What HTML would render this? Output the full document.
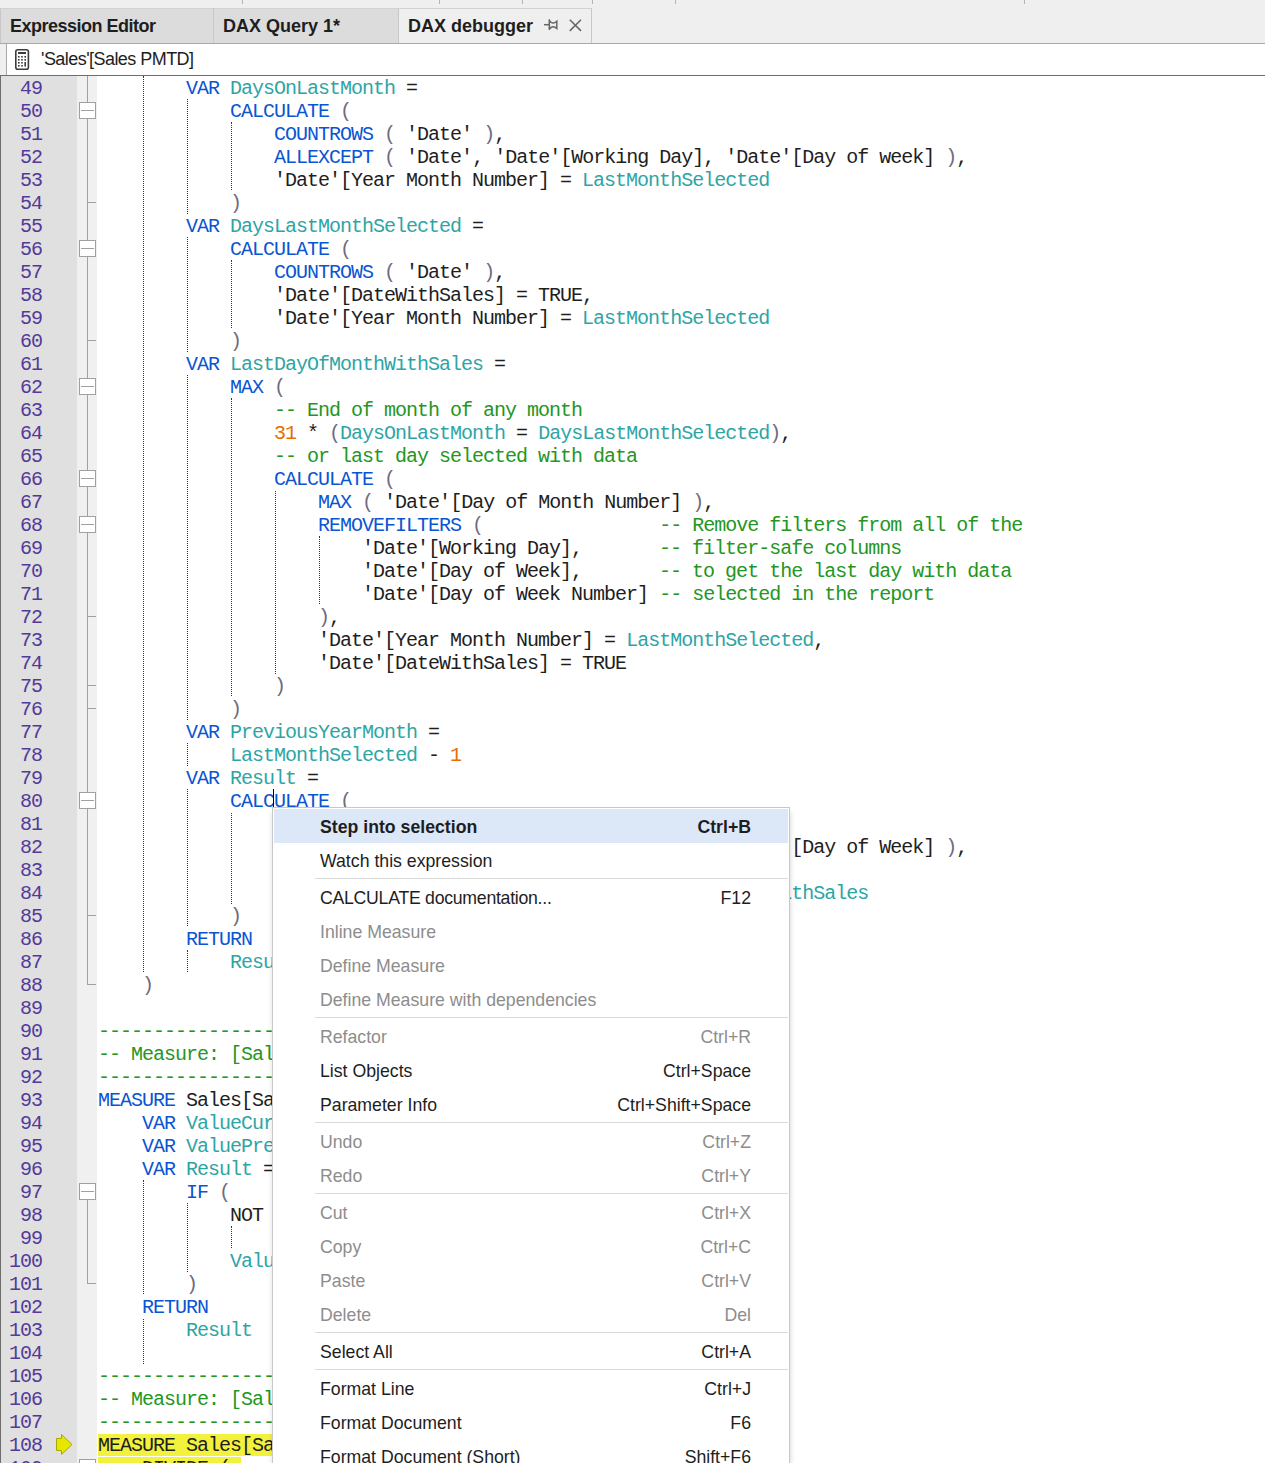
<!DOCTYPE html>
<html><head><meta charset="utf-8">
<style>
html,body{margin:0;padding:0}
body{width:1265px;height:1463px;overflow:hidden;position:relative;background:#efefef;font-family:"Liberation Sans",sans-serif}
.a{position:absolute}
.tab{position:absolute;top:8px;height:35px;background:#dcdcdc;border-top:1px solid #d2d2d2;border-left:1px solid #c8c8c8;box-sizing:border-box}
.tabt{position:absolute;top:8px;font-weight:bold;font-size:18px;line-height:18px;color:#1e1e1e;white-space:pre}
#editor{position:absolute;left:0;top:76px;width:1265px;height:1387px;background:#fff;border-left:1px solid #6d6d6d;box-sizing:border-box}
#gut{position:absolute;left:1px;top:76px;width:76px;height:1387px;background:#e0e0e0}
#fstrip{position:absolute;left:77px;top:76px;width:20px;height:1387px;background:#f0f0f0}
.ln{position:absolute;left:0;width:42px;text-align:right;font-family:"Liberation Mono",monospace;font-size:20.0px;letter-spacing:-1.0px;line-height:23px;height:23px;color:#533a9a;white-space:pre;padding-top:0.5px;box-sizing:border-box}
.code{position:absolute;left:98px;font-family:"Liberation Mono",monospace;font-size:20.0px;letter-spacing:-1.0px;line-height:23px;height:23px;white-space:pre;padding-top:0.5px;box-sizing:border-box}
.hl{position:absolute;left:98px;height:22px;background:#f2f23e}
.guide{position:absolute;width:1px;background:repeating-linear-gradient(to bottom,#333 0 1px,transparent 1px 2px)}
.fl{position:absolute;left:87px;width:1px;background:#a0a0a0}
.ft{position:absolute;left:87px;width:9px;height:1px;background:#a0a0a0}
.fb{position:absolute;left:79px;width:17px;height:17px;box-sizing:border-box;border:1px solid #a0a0a0;background:#fff}
.fb i{position:absolute;left:1px;top:7px;width:13px;height:1px;background:#a0a0a0}
#menu{position:absolute;left:272px;top:807px;width:518px;height:700px;background:#fff;border:1px solid #c8c8c8;box-sizing:border-box;padding:1px;box-shadow:2px 4px 5px -1px rgba(0,0,0,0.13),-2px 4px 5px -1px rgba(0,0,0,0.08)}
.mi{position:relative;height:34px;font-size:17.7px;color:#1e1e1e}
.mi .mt{position:absolute;left:46px;top:8px;line-height:20px;white-space:pre}
.mi .mk{position:absolute;right:37px;top:8px;line-height:20px;white-space:pre}
.mi.hot{background:#dce7f8;font-weight:bold}
.mi.dis{color:#8d8d8d}
.sep{height:3px;position:relative}
.sep:after{content:"";position:absolute;left:41px;right:0;top:1px;height:1px;background:#d9d9d9}
</style></head><body>
<!-- faint toolbar remnants -->
<div class="a" style="left:242px;top:0;width:1px;height:4px;background:#b4b4b4"></div>
<div class="a" style="left:439px;top:0;width:1px;height:4px;background:#b4b4b4"></div>
<div class="a" style="left:522px;top:0;width:1px;height:4px;background:#b4b4b4"></div>
<div class="a" style="left:592px;top:0;width:1px;height:4px;background:#b4b4b4"></div>
<div class="a" style="left:675px;top:0;width:1px;height:4px;background:#b4b4b4"></div>
<div class="a" style="left:1024px;top:0;width:1px;height:4px;background:#b4b4b4"></div>
<!-- tabs -->
<div class="tab" style="left:0;width:214px"></div>
<div class="tab" style="left:213px;width:186px"></div>
<div class="tab" style="left:398px;width:194px;background:#efefef;border-right:1px solid #c8c8c8"></div>
<div class="tabt" style="left:10px;top:17px;letter-spacing:-0.5px">Expression Editor</div>
<div class="tabt" style="left:223px;top:17px">DAX Query 1*</div>
<div class="tabt" style="left:408px;top:17px">DAX debugger</div>
<svg class="a" style="left:530px;top:10px" width="60" height="30" viewBox="0 0 60 30"><g fill="none" stroke="#666" stroke-width="1.5"><path d="M14 14.7H19.2"/><path d="M19.3 9.3V19.8"/><path d="M19.3 10.3Q22.5 15.2 26.8 11.3V18.4Q22.5 14.6 19.3 19.2"/><path d="M39.8 9.7L51 20.9M51 9.7L39.8 20.9"/></g></svg>
<div class="a" style="left:0;top:43px;width:1265px;height:1px;background:#a8a8a8"></div>

<!-- combobox row -->
<div class="a" style="left:6px;top:44px;width:1259px;height:31px;background:#fff;border-left:1px solid #a8a8a8;box-sizing:border-box"></div>
<svg class="a" style="left:14px;top:48px" width="17" height="23" viewBox="0 0 17 23">
<rect x="1.8" y="1.8" width="12.6" height="19.4" rx="2" fill="none" stroke="#3c3c3c" stroke-width="1.6"/>
<rect x="4" y="4" width="8" height="2" fill="#3c3c3c"/>
<g fill="#3c3c3c"><rect x="4" y="8" width="1.6" height="1.6"/><rect x="7.2" y="8" width="1.6" height="1.6"/><rect x="10.4" y="8" width="1.6" height="1.6"/>
<rect x="4" y="11" width="1.6" height="1.6"/><rect x="7.2" y="11" width="1.6" height="1.6"/><rect x="10.4" y="11" width="1.6" height="1.6"/>
<rect x="4" y="14" width="1.6" height="1.6"/><rect x="7.2" y="14" width="1.6" height="1.6"/><rect x="10.4" y="14" width="1.6" height="4.6"/>
<rect x="4" y="17" width="1.6" height="1.6"/><rect x="7.2" y="17" width="1.6" height="1.6"/></g>
</svg>
<div class="a" style="left:41px;top:50px;font-size:18px;line-height:18px;letter-spacing:-0.55px;color:#1e1e1e;white-space:pre">'Sales'[Sales PMTD]</div>
<div class="a" style="left:0;top:75px;width:1265px;height:1px;background:#6d6d6d"></div>

<!-- editor -->
<div id="editor"></div>
<div id="gut"></div>
<div id="fstrip"></div>
<div class="fl" style="top:76px;height:909px"></div>
<div class="ft" style="top:984px"></div>
<div class="fl" style="top:1191px;height:93px"></div>
<div class="ft" style="top:1283px"></div>
<div class="fl" style="top:1467px;height:20px"></div>
<div class="ft" style="top:202px"></div>
<div class="ft" style="top:340px"></div>
<div class="ft" style="top:616px"></div>
<div class="ft" style="top:685px"></div>
<div class="ft" style="top:708px"></div>
<div class="ft" style="top:915px"></div>
<div class="fb" style="top:102px"><i></i></div>
<div class="fb" style="top:240px"><i></i></div>
<div class="fb" style="top:378px"><i></i></div>
<div class="fb" style="top:470px"><i></i></div>
<div class="fb" style="top:516px"><i></i></div>
<div class="fb" style="top:792px"><i></i></div>
<div class="fb" style="top:1183px"><i></i></div>
<div class="fb" style="top:1459px"><i></i></div>
<div class="ln" style="top:76px">49</div>
<div class="code" style="top:76px"><span style="color:#1e1e1e">&#32;&#32;&#32;&#32;&#32;&#32;&#32;&#32;</span><span style="color:#0a55d2">VAR</span><span style="color:#1e1e1e">&#32;</span><span style="color:#2ea5a5">DaysOnLastMonth</span><span style="color:#1e1e1e">&#32;=</span></div>
<div class="ln" style="top:99px">50</div>
<div class="code" style="top:99px"><span style="color:#1e1e1e">&#32;&#32;&#32;&#32;&#32;&#32;&#32;&#32;&#32;&#32;&#32;&#32;</span><span style="color:#0a55d2">CALCULATE</span><span style="color:#1e1e1e">&#32;</span><span style="color:#6e6a80">(</span></div>
<div class="ln" style="top:122px">51</div>
<div class="code" style="top:122px"><span style="color:#1e1e1e">&#32;&#32;&#32;&#32;&#32;&#32;&#32;&#32;&#32;&#32;&#32;&#32;&#32;&#32;&#32;&#32;</span><span style="color:#0a55d2">COUNTROWS</span><span style="color:#1e1e1e">&#32;</span><span style="color:#6e6a80">(</span><span style="color:#1e1e1e">&#32;</span><span style="color:#1e1e1e">&#x27;Date&#x27;</span><span style="color:#1e1e1e">&#32;</span><span style="color:#6e6a80">)</span><span style="color:#1e1e1e">,</span></div>
<div class="ln" style="top:145px">52</div>
<div class="code" style="top:145px"><span style="color:#1e1e1e">&#32;&#32;&#32;&#32;&#32;&#32;&#32;&#32;&#32;&#32;&#32;&#32;&#32;&#32;&#32;&#32;</span><span style="color:#0a55d2">ALLEXCEPT</span><span style="color:#1e1e1e">&#32;</span><span style="color:#6e6a80">(</span><span style="color:#1e1e1e">&#32;</span><span style="color:#1e1e1e">&#x27;Date&#x27;</span><span style="color:#1e1e1e">,&#32;</span><span style="color:#1e1e1e">&#x27;Date&#x27;</span><span style="color:#1e1e1e">[Working&#32;Day]</span><span style="color:#1e1e1e">,&#32;</span><span style="color:#1e1e1e">&#x27;Date&#x27;</span><span style="color:#1e1e1e">[Day&#32;of&#32;week]</span><span style="color:#1e1e1e">&#32;</span><span style="color:#6e6a80">)</span><span style="color:#1e1e1e">,</span></div>
<div class="ln" style="top:168px">53</div>
<div class="code" style="top:168px"><span style="color:#1e1e1e">&#32;&#32;&#32;&#32;&#32;&#32;&#32;&#32;&#32;&#32;&#32;&#32;&#32;&#32;&#32;&#32;</span><span style="color:#1e1e1e">&#x27;Date&#x27;</span><span style="color:#1e1e1e">[Year&#32;Month&#32;Number]</span><span style="color:#1e1e1e">&#32;=&#32;</span><span style="color:#2ea5a5">LastMonthSelected</span></div>
<div class="ln" style="top:191px">54</div>
<div class="code" style="top:191px"><span style="color:#1e1e1e">&#32;&#32;&#32;&#32;&#32;&#32;&#32;&#32;&#32;&#32;&#32;&#32;</span><span style="color:#6e6a80">)</span></div>
<div class="ln" style="top:214px">55</div>
<div class="code" style="top:214px"><span style="color:#1e1e1e">&#32;&#32;&#32;&#32;&#32;&#32;&#32;&#32;</span><span style="color:#0a55d2">VAR</span><span style="color:#1e1e1e">&#32;</span><span style="color:#2ea5a5">DaysLastMonthSelected</span><span style="color:#1e1e1e">&#32;=</span></div>
<div class="ln" style="top:237px">56</div>
<div class="code" style="top:237px"><span style="color:#1e1e1e">&#32;&#32;&#32;&#32;&#32;&#32;&#32;&#32;&#32;&#32;&#32;&#32;</span><span style="color:#0a55d2">CALCULATE</span><span style="color:#1e1e1e">&#32;</span><span style="color:#6e6a80">(</span></div>
<div class="ln" style="top:260px">57</div>
<div class="code" style="top:260px"><span style="color:#1e1e1e">&#32;&#32;&#32;&#32;&#32;&#32;&#32;&#32;&#32;&#32;&#32;&#32;&#32;&#32;&#32;&#32;</span><span style="color:#0a55d2">COUNTROWS</span><span style="color:#1e1e1e">&#32;</span><span style="color:#6e6a80">(</span><span style="color:#1e1e1e">&#32;</span><span style="color:#1e1e1e">&#x27;Date&#x27;</span><span style="color:#1e1e1e">&#32;</span><span style="color:#6e6a80">)</span><span style="color:#1e1e1e">,</span></div>
<div class="ln" style="top:283px">58</div>
<div class="code" style="top:283px"><span style="color:#1e1e1e">&#32;&#32;&#32;&#32;&#32;&#32;&#32;&#32;&#32;&#32;&#32;&#32;&#32;&#32;&#32;&#32;</span><span style="color:#1e1e1e">&#x27;Date&#x27;</span><span style="color:#1e1e1e">[DateWithSales]</span><span style="color:#1e1e1e">&#32;=&#32;</span><span style="color:#1e1e1e">TRUE</span><span style="color:#1e1e1e">,</span></div>
<div class="ln" style="top:306px">59</div>
<div class="code" style="top:306px"><span style="color:#1e1e1e">&#32;&#32;&#32;&#32;&#32;&#32;&#32;&#32;&#32;&#32;&#32;&#32;&#32;&#32;&#32;&#32;</span><span style="color:#1e1e1e">&#x27;Date&#x27;</span><span style="color:#1e1e1e">[Year&#32;Month&#32;Number]</span><span style="color:#1e1e1e">&#32;=&#32;</span><span style="color:#2ea5a5">LastMonthSelected</span></div>
<div class="ln" style="top:329px">60</div>
<div class="code" style="top:329px"><span style="color:#1e1e1e">&#32;&#32;&#32;&#32;&#32;&#32;&#32;&#32;&#32;&#32;&#32;&#32;</span><span style="color:#6e6a80">)</span></div>
<div class="ln" style="top:352px">61</div>
<div class="code" style="top:352px"><span style="color:#1e1e1e">&#32;&#32;&#32;&#32;&#32;&#32;&#32;&#32;</span><span style="color:#0a55d2">VAR</span><span style="color:#1e1e1e">&#32;</span><span style="color:#2ea5a5">LastDayOfMonthWithSales</span><span style="color:#1e1e1e">&#32;=</span></div>
<div class="ln" style="top:375px">62</div>
<div class="code" style="top:375px"><span style="color:#1e1e1e">&#32;&#32;&#32;&#32;&#32;&#32;&#32;&#32;&#32;&#32;&#32;&#32;</span><span style="color:#0a55d2">MAX</span><span style="color:#1e1e1e">&#32;</span><span style="color:#6e6a80">(</span></div>
<div class="ln" style="top:398px">63</div>
<div class="code" style="top:398px"><span style="color:#1e1e1e">&#32;&#32;&#32;&#32;&#32;&#32;&#32;&#32;&#32;&#32;&#32;&#32;&#32;&#32;&#32;&#32;</span><span style="color:#239623">--&#32;End&#32;of&#32;month&#32;of&#32;any&#32;month</span></div>
<div class="ln" style="top:421px">64</div>
<div class="code" style="top:421px"><span style="color:#1e1e1e">&#32;&#32;&#32;&#32;&#32;&#32;&#32;&#32;&#32;&#32;&#32;&#32;&#32;&#32;&#32;&#32;</span><span style="color:#e66f00">31</span><span style="color:#1e1e1e">&#32;*&#32;</span><span style="color:#6e6a80">(</span><span style="color:#2ea5a5">DaysOnLastMonth</span><span style="color:#1e1e1e">&#32;=&#32;</span><span style="color:#2ea5a5">DaysLastMonthSelected</span><span style="color:#6e6a80">)</span><span style="color:#1e1e1e">,</span></div>
<div class="ln" style="top:444px">65</div>
<div class="code" style="top:444px"><span style="color:#1e1e1e">&#32;&#32;&#32;&#32;&#32;&#32;&#32;&#32;&#32;&#32;&#32;&#32;&#32;&#32;&#32;&#32;</span><span style="color:#239623">--&#32;or&#32;last&#32;day&#32;selected&#32;with&#32;data</span></div>
<div class="ln" style="top:467px">66</div>
<div class="code" style="top:467px"><span style="color:#1e1e1e">&#32;&#32;&#32;&#32;&#32;&#32;&#32;&#32;&#32;&#32;&#32;&#32;&#32;&#32;&#32;&#32;</span><span style="color:#0a55d2">CALCULATE</span><span style="color:#1e1e1e">&#32;</span><span style="color:#6e6a80">(</span></div>
<div class="ln" style="top:490px">67</div>
<div class="code" style="top:490px"><span style="color:#1e1e1e">&#32;&#32;&#32;&#32;&#32;&#32;&#32;&#32;&#32;&#32;&#32;&#32;&#32;&#32;&#32;&#32;&#32;&#32;&#32;&#32;</span><span style="color:#0a55d2">MAX</span><span style="color:#1e1e1e">&#32;</span><span style="color:#6e6a80">(</span><span style="color:#1e1e1e">&#32;</span><span style="color:#1e1e1e">&#x27;Date&#x27;</span><span style="color:#1e1e1e">[Day&#32;of&#32;Month&#32;Number]</span><span style="color:#1e1e1e">&#32;</span><span style="color:#6e6a80">)</span><span style="color:#1e1e1e">,</span></div>
<div class="ln" style="top:513px">68</div>
<div class="code" style="top:513px"><span style="color:#1e1e1e">&#32;&#32;&#32;&#32;&#32;&#32;&#32;&#32;&#32;&#32;&#32;&#32;&#32;&#32;&#32;&#32;&#32;&#32;&#32;&#32;</span><span style="color:#0a55d2">REMOVEFILTERS</span><span style="color:#1e1e1e">&#32;</span><span style="color:#6e6a80">(</span><span style="color:#1e1e1e">&#32;&#32;&#32;&#32;&#32;&#32;&#32;&#32;&#32;&#32;&#32;&#32;&#32;&#32;&#32;&#32;</span><span style="color:#239623">--&#32;Remove&#32;filters&#32;from&#32;all&#32;of&#32;the</span></div>
<div class="ln" style="top:536px">69</div>
<div class="code" style="top:536px"><span style="color:#1e1e1e">&#32;&#32;&#32;&#32;&#32;&#32;&#32;&#32;&#32;&#32;&#32;&#32;&#32;&#32;&#32;&#32;&#32;&#32;&#32;&#32;&#32;&#32;&#32;&#32;</span><span style="color:#1e1e1e">&#x27;Date&#x27;</span><span style="color:#1e1e1e">[Working&#32;Day]</span><span style="color:#1e1e1e">,&#32;&#32;&#32;&#32;&#32;&#32;&#32;</span><span style="color:#239623">--&#32;filter-safe&#32;columns</span></div>
<div class="ln" style="top:559px">70</div>
<div class="code" style="top:559px"><span style="color:#1e1e1e">&#32;&#32;&#32;&#32;&#32;&#32;&#32;&#32;&#32;&#32;&#32;&#32;&#32;&#32;&#32;&#32;&#32;&#32;&#32;&#32;&#32;&#32;&#32;&#32;</span><span style="color:#1e1e1e">&#x27;Date&#x27;</span><span style="color:#1e1e1e">[Day&#32;of&#32;Week]</span><span style="color:#1e1e1e">,&#32;&#32;&#32;&#32;&#32;&#32;&#32;</span><span style="color:#239623">--&#32;to&#32;get&#32;the&#32;last&#32;day&#32;with&#32;data</span></div>
<div class="ln" style="top:582px">71</div>
<div class="code" style="top:582px"><span style="color:#1e1e1e">&#32;&#32;&#32;&#32;&#32;&#32;&#32;&#32;&#32;&#32;&#32;&#32;&#32;&#32;&#32;&#32;&#32;&#32;&#32;&#32;&#32;&#32;&#32;&#32;</span><span style="color:#1e1e1e">&#x27;Date&#x27;</span><span style="color:#1e1e1e">[Day&#32;of&#32;Week&#32;Number]</span><span style="color:#1e1e1e">&#32;</span><span style="color:#239623">--&#32;selected&#32;in&#32;the&#32;report</span></div>
<div class="ln" style="top:605px">72</div>
<div class="code" style="top:605px"><span style="color:#1e1e1e">&#32;&#32;&#32;&#32;&#32;&#32;&#32;&#32;&#32;&#32;&#32;&#32;&#32;&#32;&#32;&#32;&#32;&#32;&#32;&#32;</span><span style="color:#6e6a80">)</span><span style="color:#1e1e1e">,</span></div>
<div class="ln" style="top:628px">73</div>
<div class="code" style="top:628px"><span style="color:#1e1e1e">&#32;&#32;&#32;&#32;&#32;&#32;&#32;&#32;&#32;&#32;&#32;&#32;&#32;&#32;&#32;&#32;&#32;&#32;&#32;&#32;</span><span style="color:#1e1e1e">&#x27;Date&#x27;</span><span style="color:#1e1e1e">[Year&#32;Month&#32;Number]</span><span style="color:#1e1e1e">&#32;=&#32;</span><span style="color:#2ea5a5">LastMonthSelected</span><span style="color:#1e1e1e">,</span></div>
<div class="ln" style="top:651px">74</div>
<div class="code" style="top:651px"><span style="color:#1e1e1e">&#32;&#32;&#32;&#32;&#32;&#32;&#32;&#32;&#32;&#32;&#32;&#32;&#32;&#32;&#32;&#32;&#32;&#32;&#32;&#32;</span><span style="color:#1e1e1e">&#x27;Date&#x27;</span><span style="color:#1e1e1e">[DateWithSales]</span><span style="color:#1e1e1e">&#32;=&#32;</span><span style="color:#1e1e1e">TRUE</span></div>
<div class="ln" style="top:674px">75</div>
<div class="code" style="top:674px"><span style="color:#1e1e1e">&#32;&#32;&#32;&#32;&#32;&#32;&#32;&#32;&#32;&#32;&#32;&#32;&#32;&#32;&#32;&#32;</span><span style="color:#6e6a80">)</span></div>
<div class="ln" style="top:697px">76</div>
<div class="code" style="top:697px"><span style="color:#1e1e1e">&#32;&#32;&#32;&#32;&#32;&#32;&#32;&#32;&#32;&#32;&#32;&#32;</span><span style="color:#6e6a80">)</span></div>
<div class="ln" style="top:720px">77</div>
<div class="code" style="top:720px"><span style="color:#1e1e1e">&#32;&#32;&#32;&#32;&#32;&#32;&#32;&#32;</span><span style="color:#0a55d2">VAR</span><span style="color:#1e1e1e">&#32;</span><span style="color:#2ea5a5">PreviousYearMonth</span><span style="color:#1e1e1e">&#32;=</span></div>
<div class="ln" style="top:743px">78</div>
<div class="code" style="top:743px"><span style="color:#1e1e1e">&#32;&#32;&#32;&#32;&#32;&#32;&#32;&#32;&#32;&#32;&#32;&#32;</span><span style="color:#2ea5a5">LastMonthSelected</span><span style="color:#1e1e1e">&#32;-&#32;</span><span style="color:#e66f00">1</span></div>
<div class="ln" style="top:766px">79</div>
<div class="code" style="top:766px"><span style="color:#1e1e1e">&#32;&#32;&#32;&#32;&#32;&#32;&#32;&#32;</span><span style="color:#0a55d2">VAR</span><span style="color:#1e1e1e">&#32;</span><span style="color:#2ea5a5">Result</span><span style="color:#1e1e1e">&#32;=</span></div>
<div class="ln" style="top:789px">80</div>
<div class="code" style="top:789px"><span style="color:#1e1e1e">&#32;&#32;&#32;&#32;&#32;&#32;&#32;&#32;&#32;&#32;&#32;&#32;</span><span style="color:#0a55d2">CALCULATE</span><span style="color:#1e1e1e">&#32;</span><span style="color:#6e6a80">(</span></div>
<div class="ln" style="top:812px">81</div>
<div class="code" style="top:812px"><span style="color:#1e1e1e">&#32;&#32;&#32;&#32;&#32;&#32;&#32;&#32;&#32;&#32;&#32;&#32;&#32;&#32;&#32;&#32;</span><span style="color:#1e1e1e">[Sales&#32;Amount]</span><span style="color:#1e1e1e">,</span></div>
<div class="ln" style="top:835px">82</div>
<div class="code" style="top:835px"><span style="color:#1e1e1e">&#32;&#32;&#32;&#32;&#32;&#32;&#32;&#32;&#32;&#32;&#32;&#32;&#32;&#32;&#32;&#32;</span><span style="color:#0a55d2">ALLEXCEPT</span><span style="color:#1e1e1e">&#32;</span><span style="color:#6e6a80">(</span><span style="color:#1e1e1e">&#32;</span><span style="color:#1e1e1e">&#x27;Date&#x27;</span><span style="color:#1e1e1e">,&#32;</span><span style="color:#1e1e1e">&#x27;Date&#x27;</span><span style="color:#1e1e1e">[Working&#32;Day]</span><span style="color:#1e1e1e">,&#32;</span><span style="color:#1e1e1e">&#x27;Date&#x27;</span><span style="color:#1e1e1e">[Day&#32;of&#32;Week]</span><span style="color:#1e1e1e">&#32;</span><span style="color:#6e6a80">)</span><span style="color:#1e1e1e">,</span></div>
<div class="ln" style="top:858px">83</div>
<div class="code" style="top:858px"><span style="color:#1e1e1e">&#32;&#32;&#32;&#32;&#32;&#32;&#32;&#32;&#32;&#32;&#32;&#32;&#32;&#32;&#32;&#32;</span><span style="color:#1e1e1e">&#x27;Date&#x27;</span><span style="color:#1e1e1e">[Year&#32;Month&#32;Number]</span><span style="color:#1e1e1e">&#32;=&#32;</span><span style="color:#2ea5a5">PreviousYearMonth</span><span style="color:#1e1e1e">,</span></div>
<div class="ln" style="top:881px">84</div>
<div class="code" style="top:881px"><span style="color:#1e1e1e">&#32;&#32;&#32;&#32;&#32;&#32;&#32;&#32;&#32;&#32;&#32;&#32;&#32;&#32;&#32;&#32;</span><span style="color:#1e1e1e">&#x27;Date&#x27;</span><span style="color:#1e1e1e">[Day&#32;of&#32;Month&#32;Number]</span><span style="color:#1e1e1e">&#32;&lt;=&#32;</span><span style="color:#2ea5a5">LastDayOfMonthWithSales</span></div>
<div class="ln" style="top:904px">85</div>
<div class="code" style="top:904px"><span style="color:#1e1e1e">&#32;&#32;&#32;&#32;&#32;&#32;&#32;&#32;&#32;&#32;&#32;&#32;</span><span style="color:#6e6a80">)</span></div>
<div class="ln" style="top:927px">86</div>
<div class="code" style="top:927px"><span style="color:#1e1e1e">&#32;&#32;&#32;&#32;&#32;&#32;&#32;&#32;</span><span style="color:#0a55d2">RETURN</span></div>
<div class="ln" style="top:950px">87</div>
<div class="code" style="top:950px"><span style="color:#1e1e1e">&#32;&#32;&#32;&#32;&#32;&#32;&#32;&#32;&#32;&#32;&#32;&#32;</span><span style="color:#2ea5a5">Result</span></div>
<div class="ln" style="top:973px">88</div>
<div class="code" style="top:973px"><span style="color:#1e1e1e">&#32;&#32;&#32;&#32;</span><span style="color:#6e6a80">)</span></div>
<div class="ln" style="top:996px">89</div>
<div class="code" style="top:996px"></div>
<div class="ln" style="top:1019px">90</div>
<div class="code" style="top:1019px"><span style="color:#239623">----------------------------------------------</span></div>
<div class="ln" style="top:1042px">91</div>
<div class="code" style="top:1042px"><span style="color:#239623">--&#32;Measure:&#32;[Sales&#32;PYMTD]</span></div>
<div class="ln" style="top:1065px">92</div>
<div class="code" style="top:1065px"><span style="color:#239623">----------------------------------------------</span></div>
<div class="ln" style="top:1088px">93</div>
<div class="code" style="top:1088px"><span style="color:#0a55d2">MEASURE</span><span style="color:#1e1e1e">&#32;</span><span style="color:#1e1e1e">Sales</span><span style="color:#1e1e1e">[Sales&#32;MTD&#32;growth]</span><span style="color:#1e1e1e">&#32;=</span></div>
<div class="ln" style="top:1111px">94</div>
<div class="code" style="top:1111px"><span style="color:#1e1e1e">&#32;&#32;&#32;&#32;</span><span style="color:#0a55d2">VAR</span><span style="color:#1e1e1e">&#32;</span><span style="color:#2ea5a5">ValueCurrentPeriod</span><span style="color:#1e1e1e">&#32;=&#32;</span><span style="color:#1e1e1e">[Sales&#32;MTD]</span></div>
<div class="ln" style="top:1134px">95</div>
<div class="code" style="top:1134px"><span style="color:#1e1e1e">&#32;&#32;&#32;&#32;</span><span style="color:#0a55d2">VAR</span><span style="color:#1e1e1e">&#32;</span><span style="color:#2ea5a5">ValuePreviousPeriod</span><span style="color:#1e1e1e">&#32;=&#32;</span><span style="color:#1e1e1e">[Sales&#32;PMTD]</span></div>
<div class="ln" style="top:1157px">96</div>
<div class="code" style="top:1157px"><span style="color:#1e1e1e">&#32;&#32;&#32;&#32;</span><span style="color:#0a55d2">VAR</span><span style="color:#1e1e1e">&#32;</span><span style="color:#2ea5a5">Result</span><span style="color:#1e1e1e">&#32;=</span></div>
<div class="ln" style="top:1180px">97</div>
<div class="code" style="top:1180px"><span style="color:#1e1e1e">&#32;&#32;&#32;&#32;&#32;&#32;&#32;&#32;</span><span style="color:#0a55d2">IF</span><span style="color:#1e1e1e">&#32;</span><span style="color:#6e6a80">(</span></div>
<div class="ln" style="top:1203px">98</div>
<div class="code" style="top:1203px"><span style="color:#1e1e1e">&#32;&#32;&#32;&#32;&#32;&#32;&#32;&#32;&#32;&#32;&#32;&#32;</span><span style="color:#1e1e1e">NOT</span><span style="color:#1e1e1e">&#32;</span><span style="color:#0a55d2">ISBLANK</span><span style="color:#1e1e1e">&#32;</span><span style="color:#6e6a80">(</span><span style="color:#1e1e1e">&#32;</span><span style="color:#2ea5a5">ValueCurrentPeriod</span><span style="color:#1e1e1e">&#32;</span><span style="color:#6e6a80">)</span></div>
<div class="ln" style="top:1226px">99</div>
<div class="code" style="top:1226px"><span style="color:#1e1e1e">&#32;&#32;&#32;&#32;&#32;&#32;&#32;&#32;&#32;&#32;&#32;&#32;&#32;&#32;&#32;&#32;&amp;&amp;&#32;</span><span style="color:#1e1e1e">NOT</span><span style="color:#1e1e1e">&#32;</span><span style="color:#0a55d2">ISBLANK</span><span style="color:#1e1e1e">&#32;</span><span style="color:#6e6a80">(</span><span style="color:#1e1e1e">&#32;</span><span style="color:#2ea5a5">ValuePreviousPeriod</span><span style="color:#1e1e1e">&#32;</span><span style="color:#6e6a80">)</span><span style="color:#1e1e1e">,</span></div>
<div class="ln" style="top:1249px">100</div>
<div class="code" style="top:1249px"><span style="color:#1e1e1e">&#32;&#32;&#32;&#32;&#32;&#32;&#32;&#32;&#32;&#32;&#32;&#32;</span><span style="color:#2ea5a5">ValueCurrentPeriod</span><span style="color:#1e1e1e">&#32;-&#32;</span><span style="color:#2ea5a5">ValuePreviousPeriod</span></div>
<div class="ln" style="top:1272px">101</div>
<div class="code" style="top:1272px"><span style="color:#1e1e1e">&#32;&#32;&#32;&#32;&#32;&#32;&#32;&#32;</span><span style="color:#6e6a80">)</span></div>
<div class="ln" style="top:1295px">102</div>
<div class="code" style="top:1295px"><span style="color:#1e1e1e">&#32;&#32;&#32;&#32;</span><span style="color:#0a55d2">RETURN</span></div>
<div class="ln" style="top:1318px">103</div>
<div class="code" style="top:1318px"><span style="color:#1e1e1e">&#32;&#32;&#32;&#32;&#32;&#32;&#32;&#32;</span><span style="color:#2ea5a5">Result</span></div>
<div class="ln" style="top:1341px">104</div>
<div class="code" style="top:1341px"></div>
<div class="ln" style="top:1364px">105</div>
<div class="code" style="top:1364px"><span style="color:#239623">----------------------------------------------</span></div>
<div class="ln" style="top:1387px">106</div>
<div class="code" style="top:1387px"><span style="color:#239623">--&#32;Measure:&#32;[Sales&#32;PMTD&#32;%]</span></div>
<div class="ln" style="top:1410px">107</div>
<div class="code" style="top:1410px"><span style="color:#239623">----------------------------------------------</span></div>
<div class="ln" style="top:1433px">108</div>
<div class="hl" style="top:1434px;width:319px"></div>
<div class="code" style="top:1433px"><span style="color:#1e1e1e">MEASURE&#32;Sales[Sales&#32;PMTD&#32;%]&#32;=</span></div>
<div class="ln" style="top:1456px">109</div>
<div class="hl" style="top:1457px;width:143px"></div>
<div class="code" style="top:1456px"><span style="color:#1e1e1e">&#32;&#32;&#32;&#32;DIVIDE&#32;(</span></div>
<div class="guide" style="left:143px;top:76px;height:897px;background-position:0 1px"></div>
<div class="guide" style="left:143px;top:1180px;height:115px;background-position:0 1px"></div>
<div class="guide" style="left:143px;top:1318px;height:46px;background-position:0 1px"></div>
<div class="guide" style="left:187px;top:99px;height:115px;background-position:0 0px"></div>
<div class="guide" style="left:187px;top:237px;height:115px;background-position:0 0px"></div>
<div class="guide" style="left:187px;top:375px;height:345px;background-position:0 0px"></div>
<div class="guide" style="left:187px;top:743px;height:23px;background-position:0 0px"></div>
<div class="guide" style="left:187px;top:789px;height:138px;background-position:0 0px"></div>
<div class="guide" style="left:187px;top:950px;height:23px;background-position:0 1px"></div>
<div class="guide" style="left:187px;top:1203px;height:69px;background-position:0 0px"></div>
<div class="guide" style="left:231px;top:122px;height:69px;background-position:0 1px"></div>
<div class="guide" style="left:231px;top:260px;height:69px;background-position:0 1px"></div>
<div class="guide" style="left:231px;top:398px;height:299px;background-position:0 1px"></div>
<div class="guide" style="left:231px;top:812px;height:92px;background-position:0 1px"></div>
<div class="guide" style="left:231px;top:1226px;height:23px;background-position:0 1px"></div>
<div class="guide" style="left:275px;top:490px;height:184px;background-position:0 1px"></div>
<div class="guide" style="left:319px;top:536px;height:69px;background-position:0 1px"></div>
<div class="a" style="left:273px;top:789px;width:1px;height:18px;background:#000"></div>
<!-- yellow arrow -->
<svg class="a" style="left:55px;top:1433px" width="19" height="24" viewBox="0 0 19 24"><path d="M1.5 5.5H6.5V1.5L17 11.5L6.5 21.5V17.5H1.5Z" fill="#e6e600" stroke="#a8a800" stroke-width="1"/></svg>

<div id="menu">
<div class="mi hot"><span class="mt">Step into selection</span><span class="mk">Ctrl+B</span></div>
<div class="mi "><span class="mt">Watch this expression</span><span class="mk"></span></div>
<div class="sep"></div>
<div class="mi "><span class="mt" style="letter-spacing:-0.27px">CALCULATE documentation...</span><span class="mk">F12</span></div>
<div class="mi dis"><span class="mt">Inline Measure</span><span class="mk"></span></div>
<div class="mi dis"><span class="mt">Define Measure</span><span class="mk"></span></div>
<div class="mi dis"><span class="mt">Define Measure with dependencies</span><span class="mk"></span></div>
<div class="sep"></div>
<div class="mi dis"><span class="mt">Refactor</span><span class="mk">Ctrl+R</span></div>
<div class="mi "><span class="mt">List Objects</span><span class="mk">Ctrl+Space</span></div>
<div class="mi "><span class="mt">Parameter Info</span><span class="mk">Ctrl+Shift+Space</span></div>
<div class="sep"></div>
<div class="mi dis"><span class="mt">Undo</span><span class="mk">Ctrl+Z</span></div>
<div class="mi dis"><span class="mt">Redo</span><span class="mk">Ctrl+Y</span></div>
<div class="sep"></div>
<div class="mi dis"><span class="mt">Cut</span><span class="mk">Ctrl+X</span></div>
<div class="mi dis"><span class="mt">Copy</span><span class="mk">Ctrl+C</span></div>
<div class="mi dis"><span class="mt">Paste</span><span class="mk">Ctrl+V</span></div>
<div class="mi dis"><span class="mt">Delete</span><span class="mk">Del</span></div>
<div class="sep"></div>
<div class="mi "><span class="mt">Select All</span><span class="mk">Ctrl+A</span></div>
<div class="sep"></div>
<div class="mi "><span class="mt">Format Line</span><span class="mk">Ctrl+J</span></div>
<div class="mi "><span class="mt">Format Document</span><span class="mk">F6</span></div>
<div class="mi "><span class="mt">Format Document (Short)</span><span class="mk">Shift+F6</span></div>
</div>
</body></html>
